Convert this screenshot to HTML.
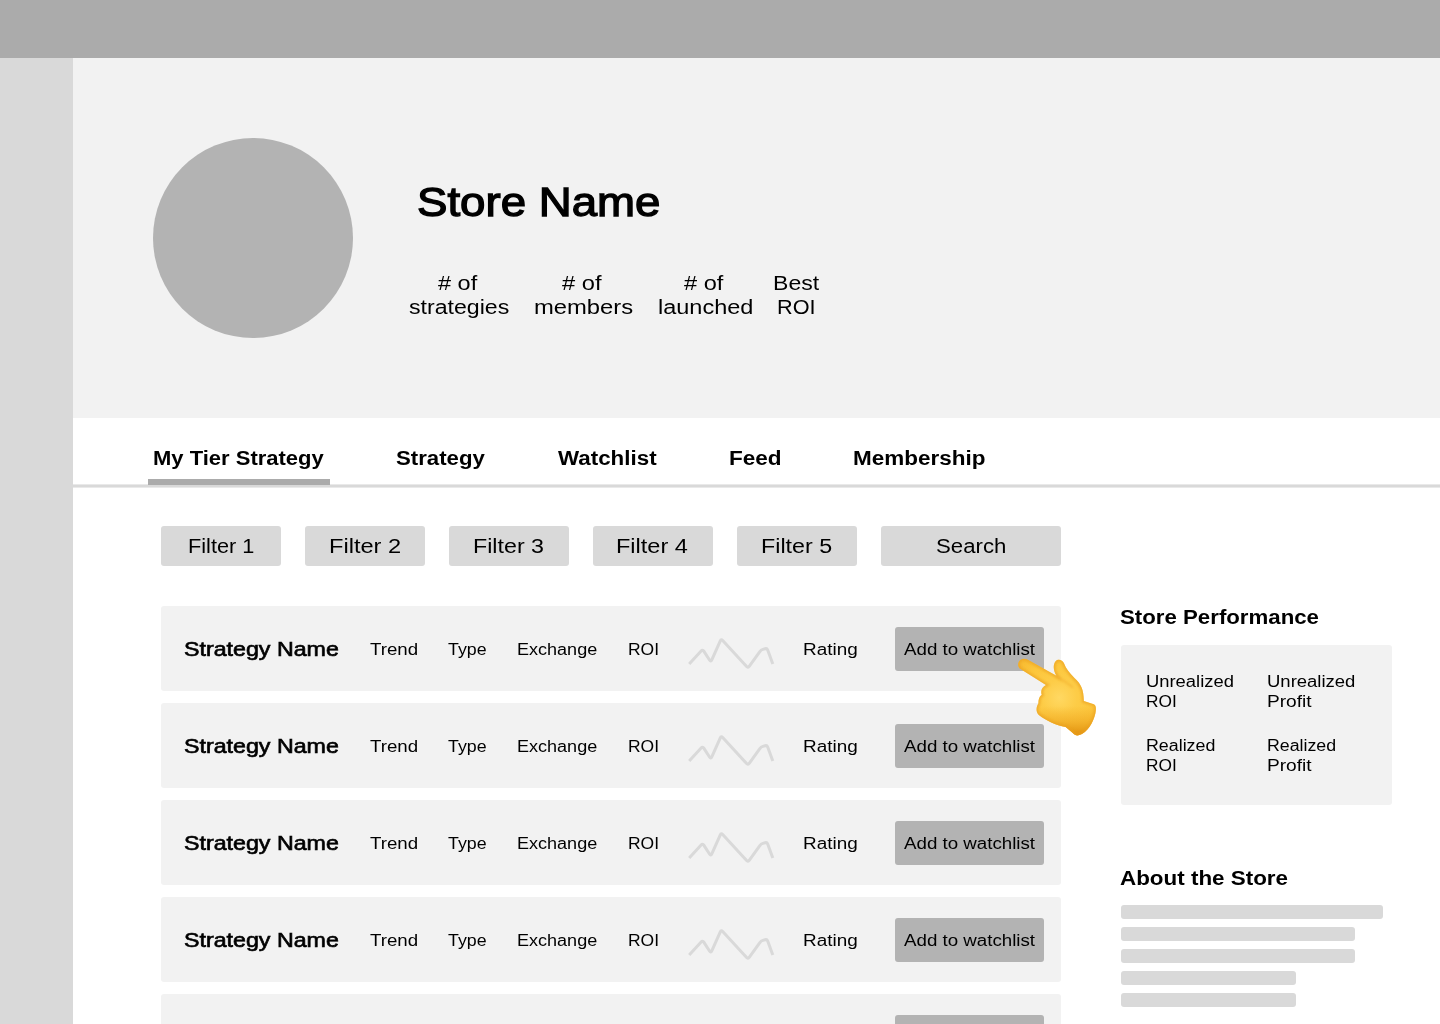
<!DOCTYPE html>
<html>
<head>
<meta charset="utf-8">
<style>
html,body{margin:0;padding:0;}
body{width:1440px;height:1024px;position:relative;overflow:hidden;background:#fff;font-family:"Liberation Sans",sans-serif;color:#000;}
.abs{position:absolute;}
.t{position:absolute;white-space:nowrap;line-height:1;transform-origin:0 0;}
.b{font-weight:700;}
.r{font-weight:400;}
#topbar{left:0;top:0;width:1440px;height:58px;background:#ababab;}
#sidebar{left:0;top:58px;width:73px;height:966px;background:#d9d9d9;}
#header{left:73px;top:58px;width:1367px;height:360px;background:#f2f2f2;}
#avatar{left:153px;top:138px;width:200px;height:200px;border-radius:50%;background:#b3b3b3;}
#tabline{left:73px;top:484px;width:1367px;height:4px;background:linear-gradient(#e9e9e9 0,#e9e9e9 1px,#d9d9d9 1px,#d9d9d9 3px,#e9e9e9 3px);}
#tabind{left:148px;top:479px;width:182px;height:6px;background:#ababab;}
.fbtn{position:absolute;top:526px;height:40px;width:120px;background:#d9d9d9;border-radius:3px;}
.row{position:absolute;left:161px;width:900px;height:85px;background:#f2f2f2;border-radius:3px;}
.row .btn{position:absolute;left:734px;top:21px;width:149px;height:44px;background:#b3b3b3;border-radius:3px;}
.row svg{position:absolute;left:520px;top:25px;}
#perf{left:1121px;top:645px;width:271px;height:160px;background:#f2f2f2;border-radius:3px;}
.bar{position:absolute;left:1121px;height:14px;background:#d9d9d9;border-radius:3px;}
</style>
</head>
<body>
<div id="topbar" class="abs"></div>
<div id="sidebar" class="abs"></div>
<div id="header" class="abs"></div>
<div id="avatar" class="abs"></div>
<div id="tabline" class="abs"></div>
<div id="tabind" class="abs"></div>
<div class="fbtn" style="left:161px"></div>
<div class="fbtn" style="left:305px"></div>
<div class="fbtn" style="left:449px"></div>
<div class="fbtn" style="left:593px"></div>
<div class="fbtn" style="left:737px"></div>
<div class="fbtn" style="left:881px;width:180px"></div>
<div class="row" style="top:606px"><div class="btn"></div><svg width="100" height="40" viewBox="0 0 100 40"><path d="M8.20,32.90 L20.11,19.92 Q21.60,18.30 22.79,20.15 L28.50,28.98 Q29.80,31.00 30.79,28.81 L39.30,9.91 Q40.20,7.90 41.69,9.52 L65.38,35.33 Q67.00,37.10 68.39,35.15 L78.84,20.53 Q80.00,18.90 81.92,18.35 L84.08,17.75 Q86.00,17.20 86.69,19.08 L91.80,33.00" fill="none" stroke="#d9d9d9" stroke-width="3" stroke-linejoin="round"/></svg></div>
<div class="row" style="top:703px"><div class="btn"></div><svg width="100" height="40" viewBox="0 0 100 40"><path d="M8.20,32.90 L20.11,19.92 Q21.60,18.30 22.79,20.15 L28.50,28.98 Q29.80,31.00 30.79,28.81 L39.30,9.91 Q40.20,7.90 41.69,9.52 L65.38,35.33 Q67.00,37.10 68.39,35.15 L78.84,20.53 Q80.00,18.90 81.92,18.35 L84.08,17.75 Q86.00,17.20 86.69,19.08 L91.80,33.00" fill="none" stroke="#d9d9d9" stroke-width="3" stroke-linejoin="round"/></svg></div>
<div class="row" style="top:800px"><div class="btn"></div><svg width="100" height="40" viewBox="0 0 100 40"><path d="M8.20,32.90 L20.11,19.92 Q21.60,18.30 22.79,20.15 L28.50,28.98 Q29.80,31.00 30.79,28.81 L39.30,9.91 Q40.20,7.90 41.69,9.52 L65.38,35.33 Q67.00,37.10 68.39,35.15 L78.84,20.53 Q80.00,18.90 81.92,18.35 L84.08,17.75 Q86.00,17.20 86.69,19.08 L91.80,33.00" fill="none" stroke="#d9d9d9" stroke-width="3" stroke-linejoin="round"/></svg></div>
<div class="row" style="top:897px"><div class="btn"></div><svg width="100" height="40" viewBox="0 0 100 40"><path d="M8.20,32.90 L20.11,19.92 Q21.60,18.30 22.79,20.15 L28.50,28.98 Q29.80,31.00 30.79,28.81 L39.30,9.91 Q40.20,7.90 41.69,9.52 L65.38,35.33 Q67.00,37.10 68.39,35.15 L78.84,20.53 Q80.00,18.90 81.92,18.35 L84.08,17.75 Q86.00,17.20 86.69,19.08 L91.80,33.00" fill="none" stroke="#d9d9d9" stroke-width="3" stroke-linejoin="round"/></svg></div>
<div class="row" style="top:994px"><div class="btn"></div><svg width="100" height="40" viewBox="0 0 100 40"><path d="M8.20,32.90 L20.11,19.92 Q21.60,18.30 22.79,20.15 L28.50,28.98 Q29.80,31.00 30.79,28.81 L39.30,9.91 Q40.20,7.90 41.69,9.52 L65.38,35.33 Q67.00,37.10 68.39,35.15 L78.84,20.53 Q80.00,18.90 81.92,18.35 L84.08,17.75 Q86.00,17.20 86.69,19.08 L91.80,33.00" fill="none" stroke="#d9d9d9" stroke-width="3" stroke-linejoin="round"/></svg></div>

<div id="perf" class="abs"></div>
<div class="bar" style="top:905px;width:262px"></div>
<div class="bar" style="top:927px;width:234px"></div>
<div class="bar" style="top:949px;width:234px"></div>
<div class="bar" style="top:971px;width:175px"></div>
<div class="bar" style="top:993px;width:175px"></div>
<div class="t r" style="left:417.38px;top:182.00px;font-size:40.7px;-webkit-text-stroke:1.302px #000;transform:scaleX(1.1214)">Store Name</div>
<div class="t r" style="left:408.54px;top:297.00px;font-size:20px;transform:scaleX(1.1565)">strategies</div>
<div class="t r" style="left:437.50px;top:273.00px;font-size:20px;transform:scaleX(1.1758)"># of</div>
<div class="t r" style="left:533.81px;top:297.00px;font-size:20px;transform:scaleX(1.1890)">members</div>
<div class="t r" style="left:561.70px;top:273.00px;font-size:20px;transform:scaleX(1.1848)"># of</div>
<div class="t r" style="left:658.23px;top:297.00px;font-size:20px;transform:scaleX(1.1747)">launched</div>
<div class="t r" style="left:684.40px;top:273.00px;font-size:20px;transform:scaleX(1.1788)"># of</div>
<div class="t r" style="left:773.09px;top:273.00px;font-size:20px;transform:scaleX(1.1526)">Best</div>
<div class="t r" style="left:777.43px;top:297.00px;font-size:20px;transform:scaleX(1.0844)">ROI</div>
<div class="t b" style="left:152.80px;top:448.00px;font-size:20px;transform:scaleX(1.1000)">My Tier Strategy</div>
<div class="t b" style="left:395.59px;top:448.00px;font-size:20px;transform:scaleX(1.1101)">Strategy</div>
<div class="t b" style="left:557.80px;top:448.00px;font-size:20px;transform:scaleX(1.1182)">Watchlist</div>
<div class="t b" style="left:728.87px;top:448.00px;font-size:20px;transform:scaleX(1.1273)">Feed</div>
<div class="t b" style="left:852.88px;top:448.00px;font-size:20px;transform:scaleX(1.1241)">Membership</div>
<div class="t r" style="left:187.63px;top:536.00px;font-size:20px;transform:scaleX(1.0862)">Filter 1</div>
<div class="t r" style="left:328.74px;top:536.00px;font-size:20px;transform:scaleX(1.1810)">Filter 2</div>
<div class="t r" style="left:473.28px;top:536.00px;font-size:20px;transform:scaleX(1.1621)">Filter 3</div>
<div class="t r" style="left:616.45px;top:536.00px;font-size:20px;transform:scaleX(1.1763)">Filter 4</div>
<div class="t r" style="left:761.27px;top:536.00px;font-size:20px;transform:scaleX(1.1638)">Filter 5</div>
<div class="t r" style="left:935.89px;top:536.00px;font-size:20px;transform:scaleX(1.1098)">Search</div>
<div class="t r" style="left:184.24px;top:639.00px;font-size:20px;-webkit-text-stroke:0.640px #000;transform:scaleX(1.1606)">Strategy Name</div>
<div class="t r" style="left:370.00px;top:642.00px;font-size:16px;transform:scaleX(1.1675)">Trend</div>
<div class="t r" style="left:448.40px;top:642.00px;font-size:16px;transform:scaleX(1.1118)">Type</div>
<div class="t r" style="left:516.67px;top:642.00px;font-size:16px;transform:scaleX(1.1271)">Exchange</div>
<div class="t r" style="left:627.81px;top:642.00px;font-size:16px;transform:scaleX(1.0923)">ROI</div>
<div class="t r" style="left:802.82px;top:642.00px;font-size:16px;transform:scaleX(1.1818)">Rating</div>
<div class="t r" style="left:903.90px;top:642.00px;font-size:16px;transform:scaleX(1.1696)">Add to watchlist</div>
<div class="t r" style="left:184.24px;top:736.00px;font-size:20px;-webkit-text-stroke:0.640px #000;transform:scaleX(1.1606)">Strategy Name</div>
<div class="t r" style="left:370.00px;top:739.00px;font-size:16px;transform:scaleX(1.1675)">Trend</div>
<div class="t r" style="left:448.40px;top:739.00px;font-size:16px;transform:scaleX(1.1118)">Type</div>
<div class="t r" style="left:516.67px;top:739.00px;font-size:16px;transform:scaleX(1.1271)">Exchange</div>
<div class="t r" style="left:627.81px;top:739.00px;font-size:16px;transform:scaleX(1.0923)">ROI</div>
<div class="t r" style="left:802.82px;top:739.00px;font-size:16px;transform:scaleX(1.1818)">Rating</div>
<div class="t r" style="left:903.90px;top:739.00px;font-size:16px;transform:scaleX(1.1696)">Add to watchlist</div>
<div class="t r" style="left:184.24px;top:833.00px;font-size:20px;-webkit-text-stroke:0.640px #000;transform:scaleX(1.1606)">Strategy Name</div>
<div class="t r" style="left:370.00px;top:836.00px;font-size:16px;transform:scaleX(1.1675)">Trend</div>
<div class="t r" style="left:448.40px;top:836.00px;font-size:16px;transform:scaleX(1.1118)">Type</div>
<div class="t r" style="left:516.67px;top:836.00px;font-size:16px;transform:scaleX(1.1271)">Exchange</div>
<div class="t r" style="left:627.81px;top:836.00px;font-size:16px;transform:scaleX(1.0923)">ROI</div>
<div class="t r" style="left:802.82px;top:836.00px;font-size:16px;transform:scaleX(1.1818)">Rating</div>
<div class="t r" style="left:903.90px;top:836.00px;font-size:16px;transform:scaleX(1.1696)">Add to watchlist</div>
<div class="t r" style="left:184.24px;top:930.00px;font-size:20px;-webkit-text-stroke:0.640px #000;transform:scaleX(1.1606)">Strategy Name</div>
<div class="t r" style="left:370.00px;top:933.00px;font-size:16px;transform:scaleX(1.1675)">Trend</div>
<div class="t r" style="left:448.40px;top:933.00px;font-size:16px;transform:scaleX(1.1118)">Type</div>
<div class="t r" style="left:516.67px;top:933.00px;font-size:16px;transform:scaleX(1.1271)">Exchange</div>
<div class="t r" style="left:627.81px;top:933.00px;font-size:16px;transform:scaleX(1.0923)">ROI</div>
<div class="t r" style="left:802.82px;top:933.00px;font-size:16px;transform:scaleX(1.1818)">Rating</div>
<div class="t r" style="left:903.90px;top:933.00px;font-size:16px;transform:scaleX(1.1696)">Add to watchlist</div>
<div class="t r" style="left:184.24px;top:1027.00px;font-size:20px;-webkit-text-stroke:0.640px #000;transform:scaleX(1.1606)">Strategy Name</div>
<div class="t r" style="left:370.00px;top:1030.00px;font-size:16px;transform:scaleX(1.1675)">Trend</div>
<div class="t r" style="left:448.40px;top:1030.00px;font-size:16px;transform:scaleX(1.1118)">Type</div>
<div class="t r" style="left:516.67px;top:1030.00px;font-size:16px;transform:scaleX(1.1271)">Exchange</div>
<div class="t r" style="left:627.81px;top:1030.00px;font-size:16px;transform:scaleX(1.0923)">ROI</div>
<div class="t r" style="left:802.82px;top:1030.00px;font-size:16px;transform:scaleX(1.1818)">Rating</div>
<div class="t r" style="left:903.90px;top:1030.00px;font-size:16px;transform:scaleX(1.1696)">Add to watchlist</div>
<div class="t b" style="left:1120.09px;top:607.00px;font-size:20px;transform:scaleX(1.1119)">Store Performance</div>
<div class="t r" style="left:1145.85px;top:674.00px;font-size:16px;transform:scaleX(1.1486)">Unrealized</div>
<div class="t r" style="left:1145.92px;top:694.00px;font-size:16px;transform:scaleX(1.0808)">ROI</div>
<div class="t r" style="left:1266.74px;top:674.00px;font-size:16px;transform:scaleX(1.1554)">Unrealized</div>
<div class="t r" style="left:1266.71px;top:694.00px;font-size:16px;transform:scaleX(1.1944)">Profit</div>
<div class="t r" style="left:1145.89px;top:738.00px;font-size:16px;transform:scaleX(1.1133)">Realized</div>
<div class="t r" style="left:1145.92px;top:758.00px;font-size:16px;transform:scaleX(1.0808)">ROI</div>
<div class="t r" style="left:1266.79px;top:738.00px;font-size:16px;transform:scaleX(1.1100)">Realized</div>
<div class="t r" style="left:1266.71px;top:758.00px;font-size:16px;transform:scaleX(1.1944)">Profit</div>
<div class="t b" style="left:1119.88px;top:868.00px;font-size:20px;transform:scaleX(1.1203)">About the Store</div>
<svg style="position:absolute;left:1014px;top:654px;" width="86" height="86" viewBox="0 0 1024 1024">
<defs>
<radialGradient id="hg" cx="540" cy="520" r="600" gradientUnits="userSpaceOnUse">
<stop offset="0" stop-color="#FFD862"/>
<stop offset="0.35" stop-color="#FDCC47"/>
<stop offset="0.75" stop-color="#FCC63C"/>
<stop offset="1" stop-color="#F8BC33"/>
</radialGradient>
<linearGradient id="wg" x1="0" y1="620" x2="0" y2="975" gradientUnits="userSpaceOnUse">
<stop offset="0" stop-color="#F0A51E" stop-opacity="0"/>
<stop offset="0.5" stop-color="#EBA01A" stop-opacity="0.5"/>
<stop offset="1" stop-color="#DC8A0A" stop-opacity="0.95"/>
</linearGradient>

<clipPath id="hc"><path d="M50,112 C58,62 115,42 160,65 L505,258 C470,200 460,130 495,85 C525,55 575,65 595,110 C620,175 660,225 720,285 C800,360 830,420 832,560 L950,598 C980,610 980,660 968,710 C940,820 880,930 770,968 C740,975 720,960 700,940 L615,870 C500,850 380,790 300,730 C255,690 265,630 290,590 C290,540 300,505 330,485 C315,440 330,395 380,368 L82,183 C55,167 46,140 50,112 Z"/></clipPath>
<filter id="bl" x="-20%" y="-20%" width="140%" height="140%"><feGaussianBlur stdDeviation="14"/></filter>
</defs>
<path d="M50,112 C58,62 115,42 160,65 L505,258 C470,200 460,130 495,85 C525,55 575,65 595,110 C620,175 660,225 720,285 C800,360 830,420 832,560 L950,598 C980,610 980,660 968,710 C940,820 880,930 770,968 C740,975 720,960 700,940 L615,870 C500,850 380,790 300,730 C255,690 265,630 290,590 C290,540 300,505 330,485 C315,440 330,395 380,368 L82,183 C55,167 46,140 50,112 Z" fill="url(#hg)"/>
<path d="M50,112 C58,62 115,42 160,65 L505,258 C470,200 460,130 495,85 C525,55 575,65 595,110 C620,175 660,225 720,285 C800,360 830,420 832,560 L950,598 C980,610 980,660 968,710 C940,820 880,930 770,968 C740,975 720,960 700,940 L615,870 C500,850 380,790 300,730 C255,690 265,630 290,590 C290,540 300,505 330,485 C315,440 330,395 380,368 L82,183 C55,167 46,140 50,112 Z" fill="url(#wg)"/>
<g clip-path="url(#hc)">
<path d="M50,112 C58,62 115,42 160,65 L505,258 C470,200 460,130 495,85 C525,55 575,65 595,110 C620,175 660,225 720,285 C800,360 830,420 832,560 L950,598 C980,610 980,660 968,710 C940,820 880,930 770,968 C740,975 720,960 700,940 L615,870 C500,850 380,790 300,730 C255,690 265,630 290,590 C290,540 300,505 330,485 C315,440 330,395 380,368 L82,183 C55,167 46,140 50,112 Z" fill="none" stroke="#EBA020" stroke-width="50" opacity="0.6" filter="url(#bl)"/>
<path d="M510,266 C570,305 630,340 690,390" fill="none" stroke="#F2AE2E" stroke-width="26" stroke-linecap="round" opacity="0.5" filter="url(#bl)"/>
</g>
</svg>

</body>
</html>
